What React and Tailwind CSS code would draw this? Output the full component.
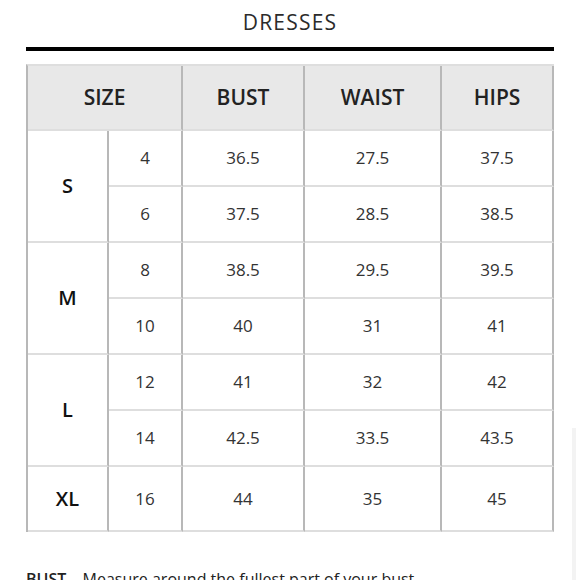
import React from "react";

const rows = [
  { size: "S", items: [["4", "36.5", "27.5", "37.5"], ["6", "37.5", "28.5", "38.5"]] },
  { size: "M", items: [["8", "38.5", "29.5", "39.5"], ["10", "40", "31", "41"]] },
  { size: "L", items: [["12", "41", "32", "42"], ["14", "42.5", "33.5", "43.5"]] },
  { size: "XL", items: [["16", "44", "35", "45"]] },
];

export default function App() {
  const cell =
    "border-r-2 border-b-2 border-r-[#b8b8b8] border-b-[#dedede] text-center align-middle p-0";

  return (
    <div
      className="relative w-[580px] h-[580px] overflow-hidden bg-white text-[#333]"
      style={{ fontFamily: '"Open Sans", "Liberation Sans", sans-serif' }}
    >
      <h1 className="mt-[8px] text-center text-[21px] leading-[28px] font-normal tracking-[1.2px] text-[#2b2b2b]">
        DRESSES
      </h1>
      <div className="mx-[26px] mt-[11px] h-[4px] bg-black" />

      <table className="ml-[26px] mt-[13px] w-[528px] table-fixed border-separate border-spacing-0 border-l-2 border-t-2 border-l-[#b8b8b8] border-t-[#dedede]">
        <colgroup>
          <col className="w-[81px]" />
          <col className="w-[74px]" />
          <col className="w-[122px]" />
          <col className="w-[137px]" />
          <col className="w-[112px]" />
        </colgroup>
        <thead>
          <tr className="bg-[#e8e8e8]">
            <th colSpan={2} className={`${cell} h-[65px] text-[21px] font-semibold text-[#222]`}>
              SIZE
            </th>
            <th className={`${cell} h-[65px] text-[21px] font-semibold text-[#222]`}>BUST</th>
            <th className={`${cell} h-[65px] text-[21px] font-semibold text-[#222]`}>WAIST</th>
            <th className={`${cell} h-[65px] text-[21px] font-semibold text-[#222]`}>HIPS</th>
          </tr>
        </thead>
        <tbody>
          {rows.map((group, gi) =>
            group.items.map((item, i) => {
              const last = gi === rows.length - 1;
              const h = last ? "h-[65px]" : "h-[56px]";
              const bottom = last ? "border-b-[#b8b8b8]" : "";
              return (
                <tr key={item[0]}>
                  {i === 0 && (
                    <td
                      rowSpan={group.items.length}
                      className={`${cell} ${bottom} text-[20px] font-semibold text-[#111]`}
                    >
                      {group.size}
                    </td>
                  )}
                  {item.map((v, k) => (
                    <td key={k} className={`${cell} ${h} ${bottom} text-[17px]`}>
                      {v}
                    </td>
                  ))}
                </tr>
              );
            })
          )}
        </tbody>
      </table>

      <p className="ml-[26px] mt-[35px] text-[16px] leading-[24px] text-[#222]">
        <span className="font-semibold">BUST</span> – Measure around the fullest part of your bust.
      </p>

      <div className="absolute right-[4px] top-[428px] bottom-0 w-[4px] bg-[#f3f3f3]" />
    </div>
  );
}
